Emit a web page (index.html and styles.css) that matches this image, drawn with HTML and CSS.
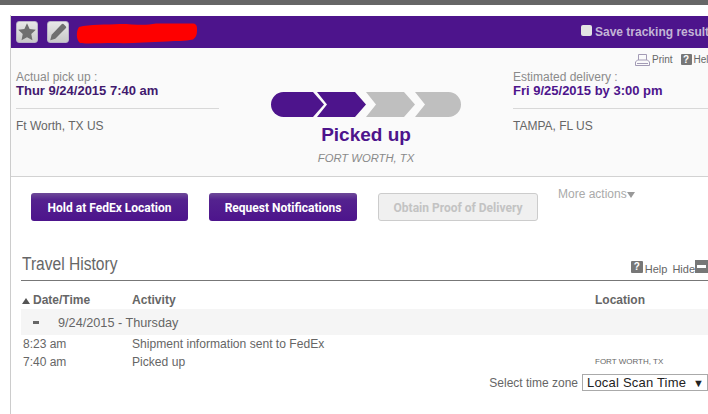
FILE: index.html
```html
<!DOCTYPE html>
<html lang="en">
<head>
<meta charset="utf-8">
<title>Track</title>
<link rel="stylesheet" href="styles.css">
</head>
<body>
<div class="topbar"></div>
<main class="card">
  <header class="head">
    <span class="tool"><svg width="22" height="22" viewBox="0 0 22 22"><path fill="#6f6f6f" d="M11 1.500l2.900 6.300 6.800.8-5 4.700 1.300 6.800-6-3.400-6 3.400 1.300-6.800-5-4.700 6.800-.8z"/></svg></span>
    <span class="tool"><svg width="22" height="22" viewBox="0 0 22 22"><path fill="#6f6f6f" d="M15 2.500q1-1 2-.2l2.700 2.700q.8 1-.2 2L8 18.500l-5.500 1.500L4 14z"/></svg></span>
    <svg class="scribble" width="121" height="21" viewBox="0 0 121 21"><path fill="#fe0000" d="M3 4C14 1 30 2 44 1c14 0 24 2 36-.5 12 0 26 0 36 0 4 0 5 2 5 5 0 5 0 8-4 11-8 2-16 1-26 2-20 1-38 2-52 1.500C24 20 10 21 4 20 0 17 0 8 3 4z"/></svg>
    <label class="save"><span class="check"></span>Save tracking results</label>
  </header>

  <section class="summary">
    <div class="side side-left">
      <div class="lbl">Actual pick up :</div>
      <div class="when">Thur 9/24/2015 7:40 am</div>
      <div class="place">Ft Worth, TX US</div>
    </div>
    <div class="mid">
      <svg class="progress" width="190" height="25" viewBox="0 0 190 25">
        <path fill="#4d148c" d="M12.500 0H42l11 12.500L42 25H12.500a12.500 12.500 0 0 1 0-25z"/>
        <path fill="#4d148c" d="M46 0h38l11 12.500L84 25H46l10-12.500z"/>
        <path fill="#bfbfbf" d="M95 0h38l11 12.500L133 25H95l10-12.500z"/>
        <path fill="#bfbfbf" d="M144 0h33.500a12.500 12.500 0 0 1 0 25H144l10-12.500z"/>
      </svg>
      <div class="status">Picked up</div>
      <div class="city">FORT WORTH, TX</div>
    </div>
    <div class="side side-right">
      <div class="printrow">
        <span class="mini"><svg width="15" height="13" viewBox="0 0 15 13"><path fill="none" stroke="#a39bb5" d="M3.500 6V.5h8V6M.5 11.500V8l2-2h10l2 2v3.500z"/><path stroke="#a39bb5" d="M2 9.500h11"/></svg>Print</span>
        <span class="mini"><span class="q">?</span>Help</span>
      </div>
      <div class="lbl">Estimated delivery :</div>
      <div class="when">Fri 9/25/2015 by 3:00 pm</div>
      <div class="place">TAMPA, FL US</div>
    </div>
  </section>

  <section class="actions">
    <button class="btn btn-hold">Hold at FedEx Location</button>
    <button class="btn btn-notify">Request Notifications</button>
    <button class="btn btn-off">Obtain Proof of Delivery</button>
    <span class="more">More actions<i class="tri"></i></span>
  </section>

  <section class="travel">
    <div class="thead">
      <h2>Travel History</h2>
      <div class="tools"><span class="q big">?</span><span class="t-help">Help</span><span class="t-hide">Hide</span><span class="minus"><i></i></span></div>
    </div>
    <div class="row cols">
      <span class="c1"><i class="up"></i>Date/Time</span><span class="c2">Activity</span><span class="c3">Location</span>
    </div>
    <div class="day"><i class="dash"></i><span class="day-text">9/24/2015 - Thursday</span></div>
    <div class="row ev"><span class="c1">8:23 am</span><span class="c2">Shipment information sent to FedEx</span></div>
    <div class="row ev"><span class="c1">7:40 am</span><span class="c2">Picked up</span><span class="c3 small">FORT WORTH, TX</span></div>
    <div class="tz"><span>Select time zone</span><span class="select">Local Scan Time<i>▼</i></span></div>
  </section>
</main>
</body>
</html>
```
FILE: styles.css
```css
html, body { margin: 0; padding: 0; }
body {
  width: 708px;
  height: 414px;
  overflow: hidden;
  background: #fff;
  font-family: "Liberation Sans", Arial, sans-serif;
  color: #666;
}
.topbar { height: 5px; background: #666; }
.card {
  width: 760px;
  height: 399px;
  margin: 10px 0 0 10px;
  border-left: 1px solid #ccc;
  box-sizing: border-box;
  padding-top: 1px;
}
.head {
  height: 32px;
  background: #4d148c;
  display: flex;
  align-items: center;
  padding-left: 5px;
  box-sizing: border-box;
  width: 697px;
  overflow: hidden;
  white-space: nowrap;
}
.tool {
  width: 20px;
  height: 20px;
  margin-right: 9px;
  border-radius: 3px;
  background: linear-gradient(#e8e8e8, #c8c8c8);
  border: 1px solid #b9b1c8;
  display: flex;
  align-items: center;
  justify-content: center;
  flex: none;
}
.tool svg { width: 20px; height: 20px; }
.scribble { margin: 2px 0 0 -2px; flex: none; }
.save {
  margin-left: 384px;
  flex: none;
  font-size: 12px;
  font-weight: bold;
  color: #c3b5d6;
  display: flex;
  align-items: center;
}
.check {
  width: 11px;
  height: 11px;
  background: #e3e3e3;
  border-radius: 2px;
  margin: -4px 3px 0 0;
}
.summary {
  width: 697px;
  height: 129px;
  box-sizing: border-box;
  background: #fafafa;
  border-bottom: 1px solid #d2d2d2;
  display: flex;
  overflow: hidden;
}
.side { flex: none; font-size: 12px; }
.side-left { width: 203px; margin-left: 5px; padding-top: 22px; }
.side-right { width: 195px; padding-top: 6px; }
.lbl { font-size: 12px; color: #8a8a8a; line-height: 14px; }
.when {
  font-size: 13px;
  font-weight: bold;
  color: #4d148c;
  line-height: 14px;
  border-bottom: 1px solid #d8d8d8;
  padding-bottom: 10px;
  white-space: nowrap;
}
.side-left .when { color: #42196e; }
.place { font-size: 12px; color: #666; margin-top: 10px; line-height: 14px; white-space: nowrap; }
.mid {
  width: 294px;
  flex: none;
  display: flex;
  flex-direction: column;
  align-items: center;
  padding-top: 44px;
  box-sizing: border-box;
}
.progress { display: block; }
.status { font-size: 19px; font-weight: bold; color: #4d148c; line-height: 22px; margin-top: 7px; }
.city { font-size: 11.25px; font-style: italic; color: #8a8a8a; line-height: 13px; margin-top: 6px; }
.printrow {
  display: flex;
  font-size: 10px;
  line-height: 12px;
  height: 16px;
  margin-left: 122px;
  white-space: nowrap;
  color: #666;
}
.mini { display: flex; align-items: flex-start; margin-right: 8px; }
.mini svg { margin: 0 2px 0 0; }
.q {
  display: inline-block;
  width: 11px;
  height: 11px;
  margin-right: 2px;
  background: #777;
  color: #fff;
  font-size: 10px;
  font-weight: bold;
  line-height: 12px;
  text-align: center;
  border-radius: 1px;
}
.actions {
  height: 68px;
  display: flex;
  align-items: flex-start;
  padding: 16px 0 0 20px;
  box-sizing: border-box;
  width: 697px;
}
.btn {
  height: 28px;
  padding: 1px 0 0;
  border-radius: 3px;
  font-family: "Roboto", "Liberation Sans", sans-serif;
  font-size: 12px;
  font-weight: bold;
  color: #fff;
  border: 0;
  background: linear-gradient(#6e4a99 0, #54228f 25%, #4d148c 100%);
  flex: none;
}
.btn-hold { width: 157px; }
.btn-notify { width: 148px; margin-left: 21px; }
.btn-off {
  width: 160px;
  margin-left: 21px;
  background: #f0f0f0;
  border: 1px solid #ccc;
  color: #c3c3c3;
}
.more { margin-left: 20px; font-size: 12px; line-height: 14px; color: #aaa; white-space: nowrap; margin-top: -6px; }
.tri {
  display: inline-block;
  border: 4px solid transparent;
  border-top: 6px solid #999;
  border-bottom: 0;
}
.travel { width: 697px; box-sizing: border-box; padding-left: 10px; font-size: 12px; }
.thead {
  display: flex;
  justify-content: space-between;
  align-items: flex-end;
  height: 36px;
  box-sizing: border-box;
  border-bottom: 1px solid #777;
  padding-bottom: 5px;
}
.thead h2 { margin: 0 0 0 1px; font-size: 18px; line-height: 22px; font-weight: normal; color: #666; transform: scaleX(.865); transform-origin: left; }
.tools { display: flex; align-items: center; font-size: 11px; line-height: 13px; color: #666; height: 14px; }
.q.big { width: 12px; height: 12px; margin-right: 2px; margin-top: -3px; }
.t-help, .t-hide { padding-top: 2px; }
.t-hide { margin-left: 5px; }
.minus { width: 13px; height: 13px; background: #777; display: flex; align-items: center; justify-content: center; margin-top: -3px; }
.minus i { width: 9px; height: 3px; background: #fff; }
.row { display: flex; line-height: 14px; white-space: nowrap; color: #666; }
.c1 { width: 111px; padding-left: 2px; box-sizing: border-box; flex: none; }
.c2 { width: 463px; flex: none; font-size: 12.1px; }
.cols { height: 28px; padding-top: 12px; box-sizing: border-box; font-weight: bold; color: #666; }
.cols .c1 { padding-left: 1px; }
.up {
  display: inline-block;
  border: 4px solid transparent;
  border-bottom: 6px solid #555;
  border-top: 0;
  margin-right: 3px;
}
.day {
  height: 26px;
  background: #f5f5f5;
  display: flex;
  align-items: center;
  color: #666;
  font-size: 12.7px;
}
.day-text { padding-top: 1px; }
.dash { width: 6px; height: 3px; background: #666; margin: 0 19px 0 12px; }
.ev { height: 18px; line-height: 18px; }
.small { font-size: 8px; }
.tz {
  display: flex;
  justify-content: flex-end;
  align-items: center;
  gap: 4px;
  margin-top: 3px;
  color: #666;
  white-space: nowrap;
}
.select {
  width: 126px;
  height: 17px;
  box-sizing: border-box;
  border: 1px solid #aaa;
  display: flex;
  justify-content: space-between;
  align-items: center;
  padding: 0 3px 0 4px;
  font-size: 13px;
  letter-spacing: .2px;
  color: #222;
  background: #fff;
}
.select i { font-style: normal; font-size: 11px; letter-spacing: 0; }
```
